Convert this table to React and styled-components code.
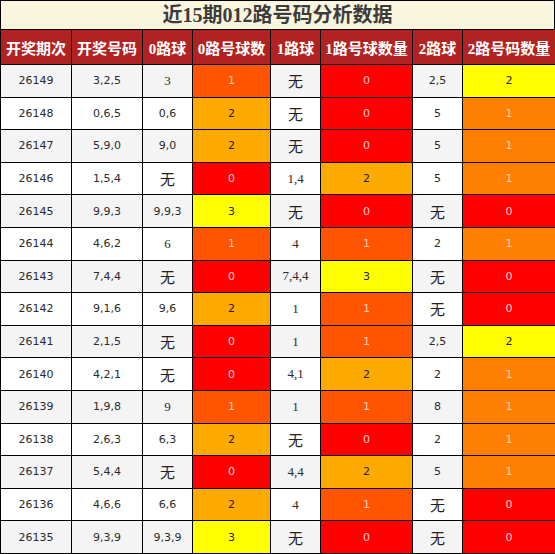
import React from "react";
import styled, { createGlobalStyle } from "styled-components";

const Global = createGlobalStyle`
  html, body { margin: 0; padding: 0; background: #fff; }
  body { font-family: "DejaVu Sans", "Noto Sans CJK SC", sans-serif; }
`;

const Wrap = styled.div`
  width: 555px;
`;

const Title = styled.div`
  box-sizing: border-box;
  height: 29px;
  border: 1px solid #000;
  border-bottom: none;
  background: #f9f6dd;
  color: #3c3c3c;
  font-family: "Liberation Serif", "Noto Sans CJK SC", serif;
  font-weight: bold;
  font-size: 20px;
  line-height: 28px;
  text-align: center;
`;

const Table = styled.table`
  width: 555px;
  border-collapse: collapse;
  table-layout: fixed;
`;

const Head = styled.th`
  height: 34px;
  padding: 0;
  border: 1px solid #000;
  background: #b22222;
  color: #fff;
  font-family: "Liberation Serif", "Noto Sans CJK SC", serif;
  font-weight: bold;
  font-size: 15px;
  text-align: center;
  white-space: nowrap;
`;

const palette = {
  red: { bg: "#ff0000", fg: "#ffd0d0" },
  hot: { bg: "#ff5500", fg: "#ffd0c0" },
  orange: { bg: "#ff8000", fg: "#ffd8b0" },
  amber: { bg: "#ffaa00", fg: "#222" },
  yellow: { bg: "#ffff00", fg: "#222" },
};

const Row = styled.tr`
  background: ${(p) => (p.$alt ? "#f4f4f4" : "#fff")};
`;

const Cell = styled.td`
  height: 31.6px;
  padding: 0;
  border: 1px solid #000;
  text-align: center;
  color: #2a2a2a;
  font-family: ${(p) =>
    p.$serif
      ? '"Liberation Serif", "Noto Sans CJK SC", serif'
      : '"DejaVu Sans", "Noto Sans CJK SC", sans-serif'};
  font-size: ${(p) => (p.$serif ? "13px" : "11px")};
`;

const None = styled.span`
  font-family: "Noto Sans CJK SC", sans-serif;
  font-size: 15px;
  color: #222;
`;

const Count = styled.td`
  height: 31.6px;
  padding: 0;
  border: 1px solid #000;
  text-align: center;
  font-family: "DejaVu Sans", sans-serif;
  font-size: 11px;
  background: ${(p) => palette[p.$tone].bg};
  color: ${(p) => palette[p.$tone].fg};
`;

const widths = [71, 71, 50, 78, 50, 92, 50, 93];
const headers = ["开奖期次", "开奖号码", "0路球", "0路号球数", "1路球", "1路号球数量", "2路球", "2路号码数量"];

const rows = [
  ["26149", "3,2,5", "3", 1, "hot", "无", 0, "red", "2,5", 2, "yellow"],
  ["26148", "0,6,5", "0,6", 2, "amber", "无", 0, "red", "5", 1, "orange"],
  ["26147", "5,9,0", "9,0", 2, "amber", "无", 0, "red", "5", 1, "orange"],
  ["26146", "1,5,4", "无", 0, "red", "1,4", 2, "amber", "5", 1, "orange"],
  ["26145", "9,9,3", "9,9,3", 3, "yellow", "无", 0, "red", "无", 0, "red"],
  ["26144", "4,6,2", "6", 1, "hot", "4", 1, "hot", "2", 1, "orange"],
  ["26143", "7,4,4", "无", 0, "red", "7,4,4", 3, "yellow", "无", 0, "red"],
  ["26142", "9,1,6", "9,6", 2, "amber", "1", 1, "hot", "无", 0, "red"],
  ["26141", "2,1,5", "无", 0, "red", "1", 1, "hot", "2,5", 2, "yellow"],
  ["26140", "4,2,1", "无", 0, "red", "4,1", 2, "amber", "2", 1, "orange"],
  ["26139", "1,9,8", "9", 1, "hot", "1", 1, "hot", "8", 1, "orange"],
  ["26138", "2,6,3", "6,3", 2, "amber", "无", 0, "red", "2", 1, "orange"],
  ["26137", "5,4,4", "无", 0, "red", "4,4", 2, "amber", "5", 1, "orange"],
  ["26136", "4,6,6", "6,6", 2, "amber", "4", 1, "hot", "无", 0, "red"],
  ["26135", "9,3,9", "9,3,9", 3, "yellow", "无", 0, "red", "无", 0, "red"],
];

const Val = ({ v, serif }) => (
  <Cell $serif={serif}>{v === "无" ? <None>无</None> : v}</Cell>
);

export default function App() {
  return (
    <Wrap>
      <Global />
      <Title>近15期012路号码分析数据</Title>
      <Table>
        <colgroup>
          {widths.map((w, i) => (
            <col key={i} style={{ width: w }} />
          ))}
        </colgroup>
        <thead>
          <tr>
            {headers.map((h) => (
              <Head key={h}>{h}</Head>
            ))}
          </tr>
        </thead>
        <tbody>
          {rows.map((r, i) => (
            <Row key={r[0]} $alt={i % 2 === 0}>
              <Val v={r[0]} />
              <Val v={r[1]} />
              <Val v={r[2]} serif={r[2].length === 1} />
              <Count $tone={r[4]}>{r[3]}</Count>
              <Val v={r[5]} serif />
              <Count $tone={r[7]}>{r[6]}</Count>
              <Val v={r[8]} />
              <Count $tone={r[10]}>{r[9]}</Count>
            </Row>
          ))}
        </tbody>
      </Table>
    </Wrap>
  );
}
